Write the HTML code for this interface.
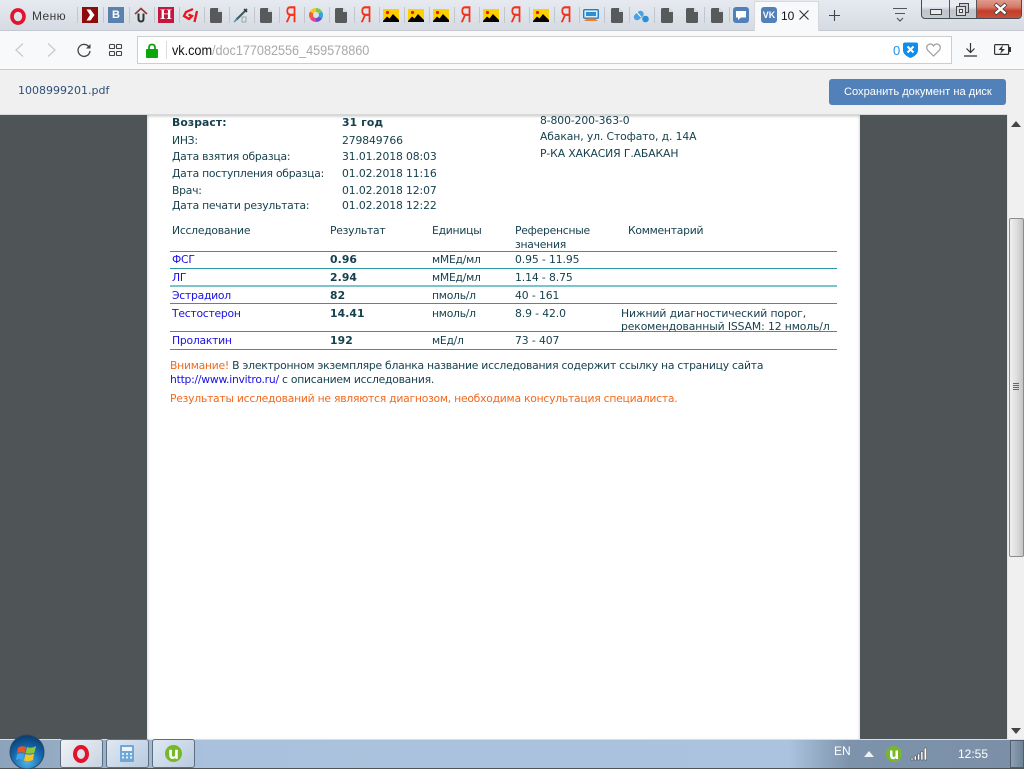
<!DOCTYPE html>
<html lang="ru"><head><meta charset="utf-8"><title>1008999201.pdf</title>
<style>
html,body{margin:0;padding:0;width:1024px;height:768px;overflow:hidden;background:#4f5456}
*{box-sizing:border-box}
.a{position:absolute;white-space:nowrap}
.r{position:absolute}
#tabs{position:absolute;left:0;top:0;width:1024px;height:31px;background:linear-gradient(#e6eaf0,#d6dbe3);border-bottom:1px solid #c4c8ce}
#addr{position:absolute;left:0;top:31px;width:1024px;height:39px;background:#f8f9fb;border-bottom:1px solid #c8cacc}
#box{position:absolute;left:137px;top:36px;width:815px;height:28px;background:#fff;border:1px solid #cbcdcf}
#hdr{position:absolute;left:0;top:70px;width:1024px;height:45px;background:#f0f0f0;border-bottom:1px solid #d8d8d8}
#page{position:absolute;left:147px;top:114px;width:713px;height:625px;background:#fff;box-shadow:0 2px 3px rgba(0,0,0,.25) inset}
#doc{font-family:"DejaVu Sans","Liberation Sans",sans-serif;font-size:10.8px;line-height:14px;color:#143f4c;filter:blur(.25px)}
#doc .a{letter-spacing:-.255px;margin-top:1px}
#doc .a.n{letter-spacing:-.11px}
#doc b{letter-spacing:.1px}
.l{position:absolute;left:170px;width:667px;height:1px;background:#2a97aa}
.b{color:#1a10e0}.o{color:#f2691e}
.sep{position:absolute;top:7px;width:1px;height:16px;background:#c2c7ce}
.ya{position:absolute;top:2px;width:20px;text-align:center;font:400 22px/26px "Liberation Sans",sans-serif;color:#f5301a;transform:scaleX(.7);-webkit-text-stroke:.4px #f5301a}
svg{position:absolute;overflow:visible}
#scroll{position:absolute;left:1007px;top:114px;width:17px;height:625px;background:#f0f0f0;border-left:1px solid #e4e4e4}
#thumb{position:absolute;left:1009px;top:218px;width:15px;height:339px;background:linear-gradient(90deg,#f0f0f0,#e0e0e0 45%,#c4c4c4);border:1px solid #8c8c8c;border-radius:2px}
#task{position:absolute;left:0;top:739px;width:1024px;height:29px;background:linear-gradient(90deg,#8da3bb 0,#a9c1dc 20%,#abc3de 77%,#7d93ab 83%,#7b90a8 100%);border-top:1px solid #d5dfeb}
.tb{position:absolute;top:739px;width:43px;height:29px;border:1px solid #5d6e80;border-radius:3px;background:linear-gradient(135deg,#dfe8f2,#b9cbdf)}
</style></head>
<body>
<svg width="0" height="0" style="position:absolute">
<defs>
<symbol id="f" viewBox="0 0 12 15"><path d="M1.5 0H8L12 4V13.5Q12 15 10.500 15H1.500Q0 15 0 13.500V1.500Q0 0 1.500 0Z" fill="#58595b"/><path d="M8 0V4H12Z" fill="#d8dce3"/></symbol>
<symbol id="p" viewBox="0 0 16 13"><rect width="16" height="13" fill="#ffd000"/><circle cx="4.500" cy="3.500" r="1.600" fill="#e8140c"/><path d="M0 12L4 7.500 6.500 9.500 10 5 16 11V13H0Z" fill="#000"/></symbol>
<symbol id="u" viewBox="0 0 16 16"><circle cx="8" cy="8" r="8" fill="#76b82a"/><path d="M4 4.500H6.500V9Q6.500 11 8 11T9.500 9V4.500H12V13H9.800V11.800Q9 13.200 7.500 13.200 4 13.200 4 9.500Z" fill="#fff"/></symbol>
</defs></svg>

<div id="tabs"></div>
<!-- Opera -->
<svg style="left:10px;top:8px" width="16" height="17" viewBox="0 0 16 17"><ellipse cx="8" cy="8.500" rx="6" ry="6.600" fill="none" stroke="#e2132d" stroke-width="3.600"/></svg>
<div class="a" style="left:32px;top:8px;font:12px/16px 'Liberation Sans',sans-serif;letter-spacing:.4px;color:#3a3a3a">Меню</div>
<div class="sep" style="left:77px"></div><div class="sep" style="left:103px"></div><div class="sep" style="left:129px"></div><div class="sep" style="left:154px"></div><div class="sep" style="left:179px"></div><div class="sep" style="left:204px"></div><div class="sep" style="left:229px"></div><div class="sep" style="left:254px"></div><div class="sep" style="left:279px"></div><div class="sep" style="left:304px"></div><div class="sep" style="left:329px"></div><div class="sep" style="left:354px"></div><div class="sep" style="left:379px"></div><div class="sep" style="left:404px"></div><div class="sep" style="left:429px"></div><div class="sep" style="left:454px"></div><div class="sep" style="left:479px"></div><div class="sep" style="left:504px"></div><div class="sep" style="left:529px"></div><div class="sep" style="left:554px"></div><div class="sep" style="left:579px"></div><div class="sep" style="left:604px"></div><div class="sep" style="left:629px"></div><div class="sep" style="left:654px"></div><div class="sep" style="left:704px"></div><div class="sep" style="left:729px"></div>
<svg style="left:82px;top:7px" width="16" height="16" viewBox="0 0 16 16"><rect width="16" height="16" fill="#8d0b0b"/><path d="M4.500 2.500H8.500L12.500 8 8.500 13.500H4.500L8 8Z" fill="#fff"/></svg>
<div class="r" style="left:108px;top:7px;width:16px;height:16px;background:#5b82ad;color:#fff;font:bold 11px/16px 'Liberation Sans',sans-serif;text-align:center">В</div>
<svg style="left:134px;top:7px" width="14" height="16" viewBox="0 0 14 16"><path d="M1 7L7 1.500 13 7" fill="none" stroke="#8b3a36" stroke-width="1.600"/><path d="M4.500 6.500V11.500Q4.500 14.500 7 14.500T9.500 11.500V6.500" fill="none" stroke="#333" stroke-width="2"/></svg>
<div class="r" style="left:158px;top:7px;width:16px;height:16px;background:#c4173f;color:#fff;font:bold 15px/16px 'Liberation Serif',serif;text-align:center">H</div>
<svg style="left:183px;top:7px" width="16" height="16" viewBox="0 0 16 16"><path d="M10 2L3 5 1 9 6 12 9 9 5.500 7.500M14 4L11.500 15" fill="none" stroke="#e8161c" stroke-width="2.300"/></svg>
<svg style="left:210px;top:8px" width="12" height="15"><use href="#f"/></svg>
<svg style="left:233px;top:7px" width="16" height="16" viewBox="0 0 16 16"><path d="M14 2L3 13" stroke="#3e5a63" stroke-width="2"/><path d="M1 15L4 12" stroke="#3a9ab0" stroke-width="1.500"/><path d="M11 2L14 5" stroke="#333" stroke-width="1.500"/><rect x="9" y="10" width="4" height="5" fill="none" stroke="#9aa" stroke-width="1"/></svg>
<svg style="left:260px;top:8px" width="12" height="15"><use href="#f"/></svg>
<div class="ya" style="left:281px">Я</div>
<svg style="left:308px;top:7px" width="16" height="16" viewBox="0 0 16 16"><g fill="none" stroke-width="4"><path d="M8 3A5 5 0 0 1 12.300 5.500" stroke="#8bc34a"/><path d="M12.300 5.500A5 5 0 0 1 12.300 10.500" stroke="#29a8e0"/><path d="M12.300 10.500A5 5 0 0 1 8 13" stroke="#6a4fc8"/><path d="M8 13A5 5 0 0 1 3.700 10.500" stroke="#e84393"/><path d="M3.700 10.500A5 5 0 0 1 3.700 5.500" stroke="#f0602a"/><path d="M3.700 5.500A5 5 0 0 1 8 3" stroke="#f7c520"/></g></svg>
<svg style="left:335px;top:8px" width="12" height="15"><use href="#f"/></svg>
<div class="ya" style="left:356px">Я</div>
<svg style="left:383px;top:9px" width="16" height="13"><use href="#p"/></svg>
<svg style="left:408px;top:9px" width="16" height="13"><use href="#p"/></svg>
<svg style="left:433px;top:9px" width="16" height="13"><use href="#p"/></svg>
<div class="ya" style="left:456px">Я</div>
<svg style="left:483px;top:9px" width="16" height="13"><use href="#p"/></svg>
<div class="ya" style="left:506px">Я</div>
<svg style="left:533px;top:9px" width="16" height="13"><use href="#p"/></svg>
<div class="ya" style="left:556px">Я</div>
<svg style="left:583px;top:9px" width="16" height="13" viewBox="0 0 16 13"><rect x=".7" y=".7" width="14.600" height="8.500" rx="1" fill="#d8eefa" stroke="#1f7fc4" stroke-width="1.400"/><rect x="3" y="3" width="10" height="4" fill="#2b8ed0"/><path d="M1 12H15L12 9.500H4Z" fill="#f08030"/></svg>
<svg style="left:611px;top:8px" width="12" height="15"><use href="#f"/></svg>
<svg style="left:633px;top:7px" width="16" height="16" viewBox="0 0 16 16"><rect x="0" y="5" width="11" height="6.500" rx="3.200" transform="rotate(-40 6 8)" fill="#4aa3e0"/><path d="M3.500 5L8 10" stroke="#fff" stroke-width="1"/><circle cx="12.500" cy="12" r="3.300" fill="#2d8fd5"/></svg>
<svg style="left:661px;top:8px" width="12" height="15"><use href="#f"/></svg>
<svg style="left:686px;top:8px" width="12" height="15"><use href="#f"/></svg>
<svg style="left:711px;top:8px" width="12" height="15"><use href="#f"/></svg>
<svg style="left:733px;top:7px" width="16" height="16" viewBox="0 0 16 16"><rect width="16" height="16" rx="3" fill="#5181b8"/><path d="M3 4H13V10.500H8L5 13V10.500H3Z" fill="#fff"/></svg>
<!-- active tab -->
<div class="r" style="left:754px;top:1px;width:65px;height:31px;background:#f8f9fb;border:1px solid #d5d9df;border-bottom:0"></div>
<div class="r" style="left:761px;top:7px;width:16px;height:16px;border-radius:3px;background:#5181b8;color:#fff;font:bold 9px/16px 'Liberation Sans',sans-serif;text-align:center">VK</div>
<div class="a" style="left:781px;top:8px;font:12px/16px 'Liberation Sans',sans-serif;color:#111">10</div>
<svg style="left:799px;top:10px" width="10" height="10"><path d="M.5.5L9.500 9.500M9.500.5L.5 9.500" stroke="#333" stroke-width="1.100"/></svg>
<svg style="left:829px;top:10px" width="11" height="11"><path d="M5.500 0V11M0 5.500H11" stroke="#444" stroke-width="1.100"/></svg>
<svg style="left:893px;top:8px" width="14" height="14"><path d="M0 .5H14M2 5.500H12" stroke="#555" stroke-width="1"/><path d="M4 10L7 13 10 10" fill="none" stroke="#555" stroke-width="1.200"/></svg>
<!-- window controls -->
<div class="r" style="left:921px;top:-2px;width:101px;height:21px;border:1px solid #444c55;border-radius:0 0 4px 4px;background:linear-gradient(#e8ebf0 40%,#bfc5cb 60%,#c6cbd0);overflow:hidden">
  <div class="r" style="left:55px;top:0;width:45px;height:20px;background:linear-gradient(#e0a095,#d87a68 40%,#c43d28 60%,#c9553f)"></div>
  <div class="r" style="left:27px;top:0;width:1px;height:20px;background:#555"></div>
  <div class="r" style="left:54px;top:0;width:1px;height:20px;background:#555"></div>
</div>
<div class="r" style="left:930px;top:9px;width:12px;height:6px;background:#e8ecef;border:1px solid #444"></div>
<svg style="left:956px;top:3px" width="13" height="13"><rect x="3.500" y=".5" width="9" height="9" fill="#ccd" stroke="#444"/><rect x=".5" y="3.500" width="9" height="9" fill="#d8dce0" stroke="#444"/><rect x="3.500" y="6.500" width="3" height="3" fill="#fff" stroke="#444"/></svg>
<svg style="left:993px;top:3px" width="15" height="12"><path d="M2 1L13 11M13 1L2 11" stroke="#3d3d3d" stroke-width="4"/><path d="M2.500 1.500L12.500 10.500M12.500 1.500L2.500 10.500" stroke="#fff" stroke-width="2.500"/></svg>

<!-- address bar -->
<div id="addr"></div>
<svg style="left:15px;top:43px" width="9" height="14"><path d="M8 .5L1 7 8 13.500" fill="none" stroke="#c8cace" stroke-width="1.300"/></svg>
<svg style="left:47px;top:43px" width="9" height="14"><path d="M1 .5L8 7 1 13.500" fill="none" stroke="#c8cace" stroke-width="1.300"/></svg>
<svg style="left:77px;top:43px" width="14" height="14" viewBox="0 0 14 14"><path d="M12.300 4.500A6 6 0 1 0 13 8" fill="none" stroke="#444" stroke-width="1.300"/><path d="M13.500 1V5.500H9Z" fill="#444"/></svg>
<svg style="left:109px;top:44px" width="13" height="12"><g fill="none" stroke="#444" stroke-width="1.100"><rect x=".5" y=".5" width="5" height="4" rx=".8"/><rect x="7.500" y=".5" width="5" height="4" rx=".8"/><rect x=".5" y="7.500" width="5" height="4" rx=".8"/><rect x="7.500" y="7.500" width="5" height="4" rx=".8"/></g></svg>
<div id="box"></div>
<svg style="left:146px;top:43px" width="12" height="15" viewBox="0 0 12 15"><path d="M3 7V4.500Q3 1.500 6 1.500T9 4.500V7" fill="none" stroke="#0aa60a" stroke-width="1.800"/><rect y="6" width="12" height="9" rx="1" fill="#0aa60a"/></svg>
<div class="r" style="left:166px;top:41px;width:1px;height:18px;background:#dcdcdc"></div>
<div class="a" style="left:172px;top:42px;font:14px/17px 'Liberation Sans',sans-serif;letter-spacing:-.05px;color:#111;transform:scaleX(.908);transform-origin:0 0">vk.com<span style="color:#a9a9a9">/doc177082556_459578860</span></div>
<div class="a" style="left:893px;top:42px;font:13px/17px 'Liberation Sans',sans-serif;color:#1a90f0">0</div>
<svg style="left:903px;top:42px" width="15" height="16" viewBox="0 0 15 16"><path d="M2 .5H13Q15 .5 15 2.500V8Q15 13 7.500 16 0 13 0 8V2.500Q0 .5 2 .5Z" fill="#0d8df0"/><path d="M4.500 4.500L10.500 10.500M10.500 4.500L4.500 10.500" stroke="#fff" stroke-width="2"/></svg>
<svg style="left:926px;top:43px" width="15" height="14" viewBox="0 0 15 14"><path d="M7.500 13L1.500 7Q-.5 3.500 2.500 1.500 5.500 0 7.500 3 9.500 0 12.500 1.500 15.500 3.500 13.500 7Z" fill="none" stroke="#9c9c9c" stroke-width="1.200"/></svg>
<svg style="left:964px;top:43px" width="13" height="14"><path d="M6.500 0V9M2.500 5.500L6.500 9.500 10.500 5.500M0 13H13" fill="none" stroke="#333" stroke-width="1.200"/></svg>
<svg style="left:994px;top:44px" width="17" height="11" viewBox="0 0 17 11"><rect x=".6" y=".6" width="14" height="9.800" rx="1" fill="none" stroke="#333" stroke-width="1.200"/><rect x="15" y="3" width="2" height="5" fill="#333"/><path d="M9 1L4.500 6H7.500L6 10 11 5H8Z" fill="#333"/></svg>

<!-- document area -->
<div id="page"></div>
<div id="doc">
<div class="a" style="left:172px;top:115px;font-weight:bold"><b>Возраст:</b></div>
<div class="a" style="left:342px;top:115px;font-weight:bold"><b>31 год</b></div>
<div class="a" style="left:172px;top:133px">ИНЗ:</div><div class="a n" style="left:342px;top:133px">279849766</div>
<div class="a" style="left:172px;top:149px">Дата взятия образца:</div><div class="a n" style="left:342px;top:149px">31.01.2018 08:03</div>
<div class="a" style="left:172px;top:166px">Дата поступления образца:</div><div class="a n" style="left:342px;top:166px">01.02.2018 11:16</div>
<div class="a" style="left:172px;top:183px">Врач:</div><div class="a n" style="left:342px;top:183px">01.02.2018 12:07</div>
<div class="a" style="left:172px;top:198px">Дата печати результата:</div><div class="a n" style="left:342px;top:198px">01.02.2018 12:22</div>
<div class="a n" style="left:540px;top:113px">8-800-200-363-0</div>
<div class="a n" style="left:540px;top:129px">Абакан, ул. Стофато, д. 14А</div>
<div class="a n" style="left:540px;top:146px">Р-КА ХАКАСИЯ Г.АБАКАН</div>

<div class="a" style="left:172px;top:223px">Исследование</div>
<div class="a" style="left:330px;top:223px">Результат</div>
<div class="a" style="left:432px;top:223px">Единицы</div>
<div class="a" style="left:515px;top:223px">Референсные</div>
<div class="a" style="left:515px;top:237px">значения</div>
<div class="a" style="left:628px;top:223px">Комментарий</div>

<div class="l" style="top:251px"></div>
<div class="l" style="top:268px"></div>
<div class="l" style="top:285px;height:2px;background:#7cc4cc"></div>
<div class="l" style="top:303px"></div>
<div class="l" style="top:331px"></div>
<div class="l" style="top:349px"></div>

<div class="a b" style="left:172px;top:252px">ФСГ</div><div class="a" style="left:330px;top:252px;font-weight:bold"><b>0.96</b></div><div class="a" style="left:432px;top:252px">мМЕд/мл</div><div class="a n" style="left:515px;top:252px">0.95 - 11.95</div>
<div class="a b" style="left:172px;top:270px">ЛГ</div><div class="a" style="left:330px;top:270px;font-weight:bold"><b>2.94</b></div><div class="a" style="left:432px;top:270px">мМЕд/мл</div><div class="a n" style="left:515px;top:270px">1.14 - 8.75</div>
<div class="a b" style="left:172px;top:288px">Эстрадиол</div><div class="a" style="left:330px;top:288px;font-weight:bold"><b>82</b></div><div class="a" style="left:432px;top:288px">пмоль/л</div><div class="a n" style="left:515px;top:288px">40 - 161</div>
<div class="a b" style="left:172px;top:306px">Тестостерон</div><div class="a" style="left:330px;top:306px;font-weight:bold"><b>14.41</b></div><div class="a" style="left:432px;top:306px">нмоль/л</div><div class="a n" style="left:515px;top:306px">8.9 - 42.0</div>
<div class="a n" style="left:621px;top:306px">Нижний диагностический порог,</div>
<div class="a n" style="left:621px;top:319px">рекомендованный ISSAM: 12 нмоль/л</div>
<div class="a b" style="left:172px;top:333px">Пролактин</div><div class="a" style="left:330px;top:333px;font-weight:bold"><b>192</b></div><div class="a" style="left:432px;top:333px">мЕд/л</div><div class="a n" style="left:515px;top:333px">73 - 407</div>

<div class="a" style="left:170px;top:358px"><span class="o">Внимание!</span> В электронном экземпляре бланка название исследования содержит ссылку на страницу сайта</div>
<div class="a" style="left:170px;top:372px"><span class="b">http://www.invitro.ru/</span> с описанием исследования.</div>
<div class="a o" style="left:170px;top:391px">Результаты исследований не являются диагнозом, необходима консультация специалиста.</div>
</div>

<!-- pdf header -->
<div id="hdr"></div>
<div class="a" style="left:18px;top:84px;font:11px/14px 'DejaVu Sans',sans-serif;color:#2f4f78">1008999201.pdf</div>
<div class="r" style="left:829px;top:79px;width:177px;height:26px;background:#5181b8;border-radius:3px"></div>
<div class="a" style="left:844px;top:85px;font:11.100px/15px 'Liberation Sans',sans-serif;color:#fff">Сохранить документ на диск</div>

<!-- scrollbar -->
<div id="scroll"></div>
<svg style="left:1011px;top:121px" width="10" height="6"><path d="M5 0L10 6H0Z" fill="#444"/></svg>
<div id="thumb"></div>
<div class="r" style="left:1013px;top:383px;width:6px;height:1px;background:#666;box-shadow:0 2px 0 #666,0 4px 0 #666,0 6px 0 #666"></div>
<svg style="left:1011px;top:728px" width="10" height="6"><path d="M0 0H10L5 6Z" fill="#444"/></svg>

<!-- taskbar -->
<div id="task"></div>
<svg style="left:8px;top:733px" width="38" height="36" viewBox="0 0 38 36"><defs><radialGradient id="o" cx=".5" cy=".8" r=".8"><stop offset="0" stop-color="#4fb3e8"/><stop offset=".6" stop-color="#1262a8"/><stop offset="1" stop-color="#0b3a6a"/></radialGradient></defs><circle cx="19" cy="19" r="17" fill="url(#o)" stroke="#2b4a6a"/><path d="M10 15Q13 12 18 14L16.500 20Q12 18 9 20.500Z" fill="#e8552a"/><path d="M19 14Q23 16 28 13L26.500 19.500Q22 21.500 17.700 20Z" fill="#8cc83c"/><path d="M9 21.500Q12 19 16 21L15 27Q11.500 25 8 27Z" fill="#3fa4e8"/><path d="M17.500 21Q22 23 26 20.500L25 27Q20.500 29 16 27.500Z" fill="#f7c325"/></svg>
<div class="tb" style="left:60px;background:linear-gradient(135deg,#f0f2f5,#c8d4e2)"></div>
<svg style="left:72px;top:745px" width="18" height="18" viewBox="0 0 18 18"><ellipse cx="9" cy="9" rx="6" ry="7" fill="none" stroke="#e2132d" stroke-width="4"/></svg>
<div class="tb" style="left:106px"></div>
<svg style="left:120px;top:745px" width="14" height="17" viewBox="0 0 14 17"><rect width="14" height="17" rx="1" fill="#6ea7d8"/><rect x="2" y="2" width="10" height="4" fill="#f0f4f8"/><path d="M2 8H4V10H2ZM6 8H8V10H6ZM10 8H12V10H10ZM2 11.500H4V13.500H2ZM6 11.500H8V13.500H6ZM10 11.500H12V13.500H10Z" fill="#e4eef8"/></svg>
<div class="tb" style="left:152px"></div>
<svg style="left:165px;top:745px" width="17" height="17"><use href="#u"/></svg>
<div class="a" style="left:834px;top:744px;font:12px/15px 'Liberation Sans',sans-serif;color:#fff">EN</div>
<svg style="left:864px;top:751px" width="10" height="6"><path d="M5 0L10 6H0Z" fill="#eef2f6"/></svg>
<svg style="left:886px;top:746px" width="16" height="16"><use href="#u"/></svg>
<svg style="left:911px;top:748px" width="16" height="12"><path d="M0 10H2V12H0ZM3.300 8H5.300V12H3.300ZM6.600 6H8.600V12H6.600ZM9.900 3.500H11.900V12H9.900ZM13.200 0H15.500V12H13.200Z" fill="#fff" stroke="#222" stroke-width=".4"/></svg>
<div class="a" style="left:958px;top:747px;font:12px/15px 'Liberation Sans',sans-serif;color:#fff">12:55</div>
<div class="r" style="left:1010px;top:740px;width:14px;height:28px;background:linear-gradient(90deg,#8ea0b2,#6e8298);border:1px solid #4e5e6e"></div>
</body></html>
